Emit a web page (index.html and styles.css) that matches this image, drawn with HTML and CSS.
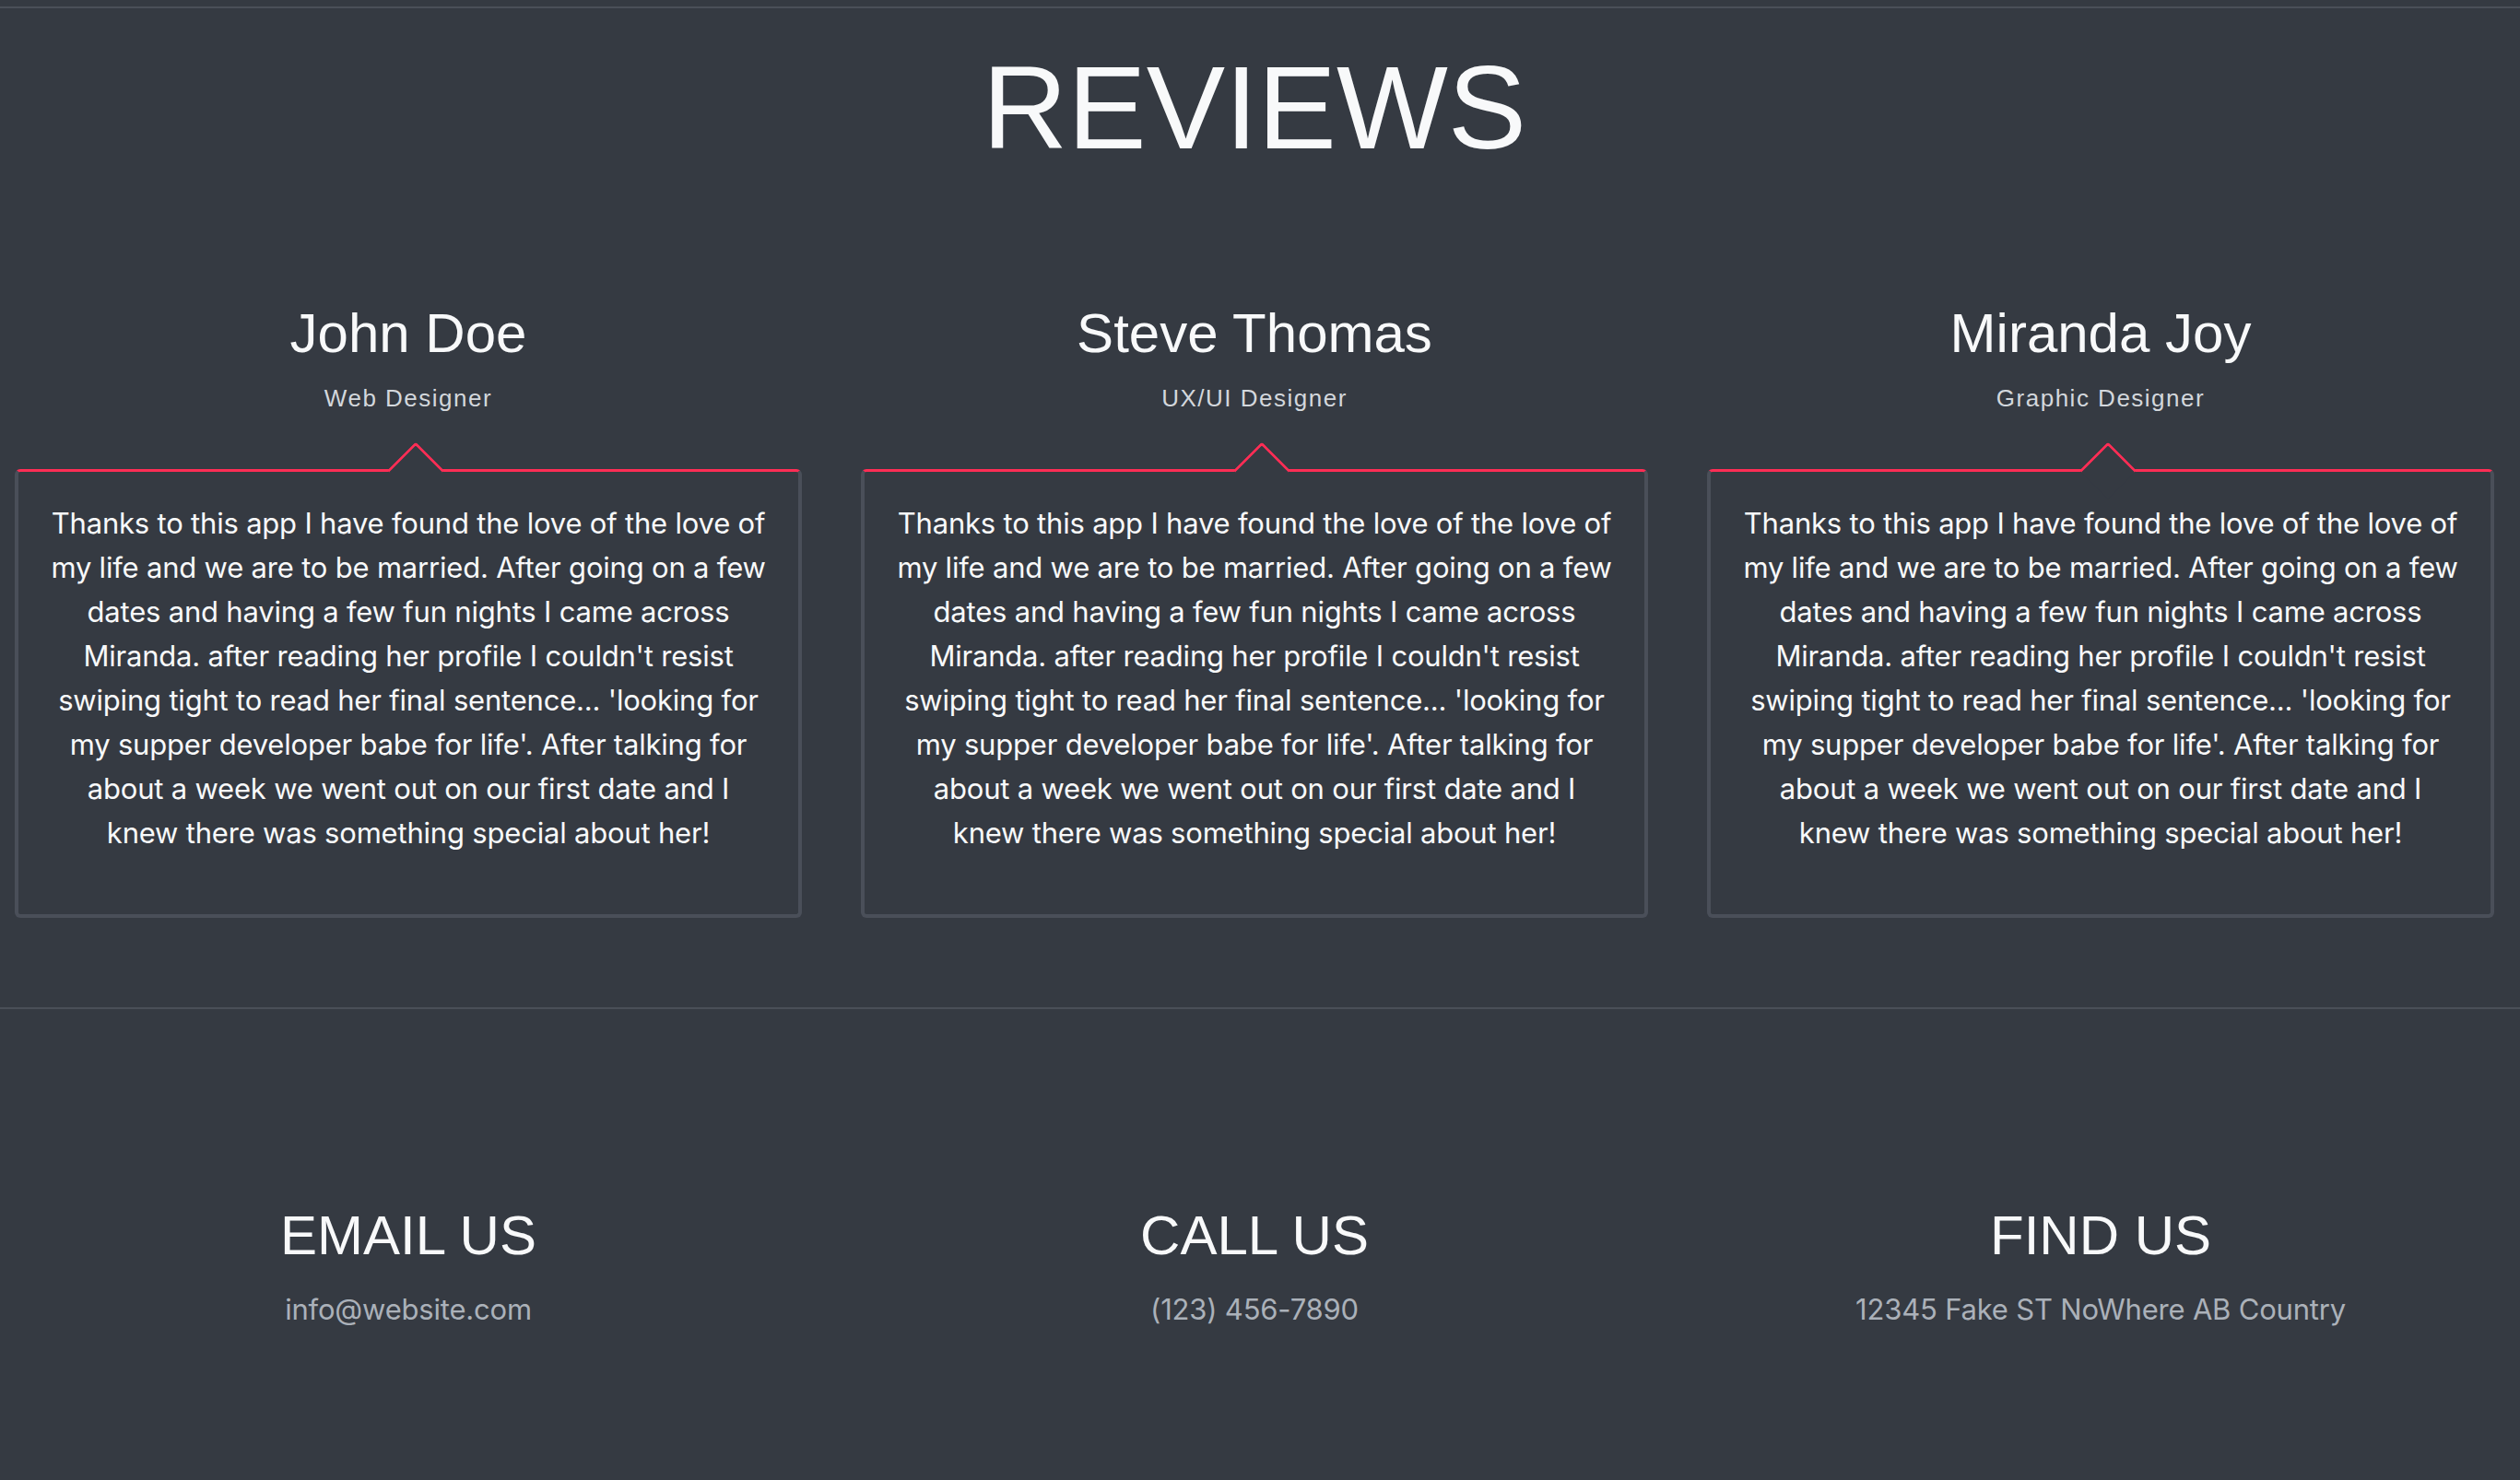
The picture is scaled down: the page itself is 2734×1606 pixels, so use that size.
FILE: index.html
```html
<!DOCTYPE html>
<html lang="en">
<head>
<meta charset="utf-8">
<title>Reviews</title>
<link rel="stylesheet" href="styles.css">
</head>
<body>
<section class="reviews">
  <h1 class="title">REVIEWS</h1>
  <div class="grid">
    <div class="review">
      <h2 class="name">John Doe</h2>
      <p class="role">Web Designer</p>
      <div class="card">
        <p class="quote">Thanks to this app I have found the love of the love of my life and we are to be married. After going on a few dates and having a few fun nights I came across Miranda. after reading her profile I couldn't resist swiping tight to read her final sentence... 'looking for my supper developer babe for life'. After talking for about a week we went out on our first date and I knew there was something special about her!</p>
      </div>
    </div>
    <div class="review">
      <h2 class="name">Steve Thomas</h2>
      <p class="role">UX/UI Designer</p>
      <div class="card">
        <p class="quote">Thanks to this app I have found the love of the love of my life and we are to be married. After going on a few dates and having a few fun nights I came across Miranda. after reading her profile I couldn't resist swiping tight to read her final sentence... 'looking for my supper developer babe for life'. After talking for about a week we went out on our first date and I knew there was something special about her!</p>
      </div>
    </div>
    <div class="review">
      <h2 class="name">Miranda Joy</h2>
      <p class="role">Graphic Designer</p>
      <div class="card">
        <p class="quote">Thanks to this app I have found the love of the love of my life and we are to be married. After going on a few dates and having a few fun nights I came across Miranda. after reading her profile I couldn't resist swiping tight to read her final sentence... 'looking for my supper developer babe for life'. After talking for about a week we went out on our first date and I knew there was something special about her!</p>
      </div>
    </div>
  </div>
</section>
<footer class="contact">
  <div class="grid">
    <div class="contact-item">
      <h2 class="contact-title">EMAIL US</h2>
      <p class="contact-text">info@website.com</p>
    </div>
    <div class="contact-item">
      <h2 class="contact-title">CALL US</h2>
      <p class="contact-text">(123) 456-7890</p>
    </div>
    <div class="contact-item">
      <h2 class="contact-title">FIND US</h2>
      <p class="contact-text">12345 Fake ST NoWhere AB Country</p>
    </div>
  </div>
</footer>
</body>
</html>
```

FILE: styles.css
```css
html, body {
  margin: 0;
  padding: 0;
}

body {
  background: #353a42;
  color: #f8f9fa;
  font-family: Inter, "Noto Sans", "Liberation Sans", sans-serif;
}

.grid {
  display: grid;
  grid-template-columns: repeat(3, 1fr);
  column-gap: 64px;
  padding: 0 28px 0 16px;
}

.reviews {
  margin-top: 7px;
  border-top: 2px solid #4a4f58;
  border-bottom: 2px solid #4a4f58;
  padding: 31px 0 97px;
}

.title {
  margin: 0 0 132px;
  padding: 0 28px 0 16px;
  font: 400 128px/1.2 "Liberation Sans", Arial, sans-serif;
  text-align: center;
  color: #f8f9fa;
}

.review {
  display: flex;
  flex-direction: column;
  align-items: stretch;
  text-align: center;
}

.name {
  margin: 0 0 19px;
  font: 400 60px/72px "Liberation Sans", Arial, sans-serif;
  color: #f8f9fa;
}

.role {
  margin: 0 0 61px;
  font: 400 26px/31px "Liberation Sans", Arial, sans-serif;
  letter-spacing: 1.5px;
  color: #d3d7dc;
}

.card {
  position: relative;
  border: 4px solid #4a4f59;
  border-top: 3px solid #ff2d55;
  border-radius: 6px;
  padding: 32px 33.5px 32px;
}

.card::before {
  content: "";
  position: absolute;
  left: calc(50% + 8px);
  top: -3px;
  width: 41px;
  height: 41px;
  background: #353a42;
  border-top: 3px solid #ff2d55;
  border-left: 3px solid #ff2d55;
  border-top-left-radius: 4px;
  transform: translate(-50%, -50%) translateY(1.5px) rotate(45deg);
}

.quote {
  margin: 0 0 32px;
  font-size: 31px;
  line-height: 48px;
  letter-spacing: -0.2px;
  color: #f8f9fa;
}

.contact {
  padding: 210px 0 120px;
}

.contact-item {
  text-align: center;
}

.contact-title {
  margin: 0 0 20px;
  font: 400 60px/72px "Liberation Sans", Arial, sans-serif;
  color: #f8f9fa;
}

.contact-text {
  margin: 0;
  font-size: 31px;
  line-height: 48px;
  letter-spacing: -0.2px;
  color: #abb1b9;
}
```
